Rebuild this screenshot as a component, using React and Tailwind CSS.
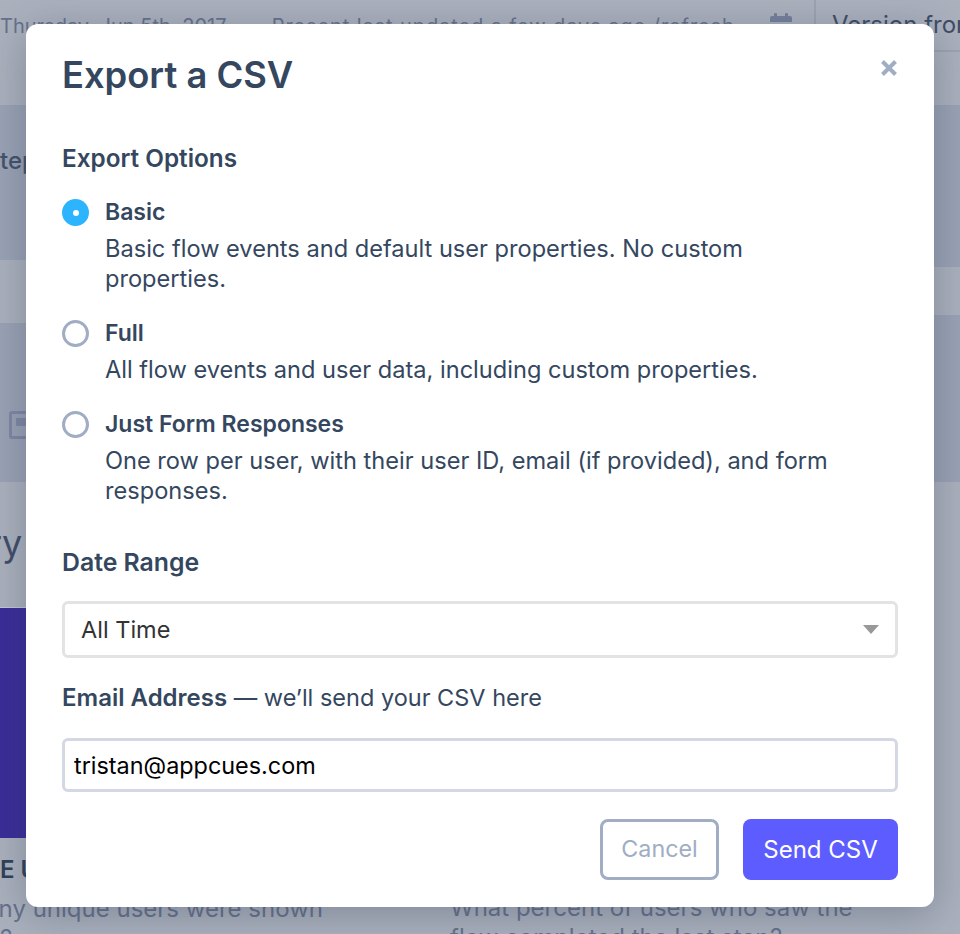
const sans = "font-['Inter','Noto_Sans',sans-serif]";

function CalendarIcon() {
  return (
    <svg width="22" height="22" viewBox="0 0 22 22" fill="#75819a">
      <rect x="4" y="0" width="3" height="4" rx="1" />
      <rect x="15" y="0" width="3" height="4" rx="1" />
      <path d="M0 5a2 2 0 0 1 2-2h18a2 2 0 0 1 2 2v4H0zM0 11h22v9a2 2 0 0 1-2 2H2a2 2 0 0 1-2-2z" />
    </svg>
  );
}

function StepIcon() {
  return (
    <svg width="26" height="28" viewBox="0 0 26 28">
      <rect x="1.5" y="1.5" width="23" height="25" rx="1.5" fill="none" stroke="#7f88a3" strokeWidth="3" />
      <rect x="7" y="7" width="12" height="8" fill="#7f88a3" />
    </svg>
  );
}

// dimmed page behind the modal
function Backdrop() {
  return (
    <div className="w-[960px] h-[934px] overflow-hidden bg-[#abb1bd] text-[#66728b]">
      <div className="h-[105px] flex items-start">
        <div className="w-[814px] h-[52px] flex justify-between pt-3 pr-[22px] text-[20px] leading-7 whitespace-nowrap">
          <span>
            Thursday, Jun 5th, 2017 — <span className="ml-3.5 tracking-[0.9px]">Present last updated a few days ago /refresh</span>
          </span>
          <span className="pt-px"><CalendarIcon /></span>
        </div>
        <div className="flex-1 h-[52px] border-l-2 border-b-2 border-[#9ca3b1] pl-4 pt-[9px] text-2xl leading-8 text-[#3f4d66] whitespace-nowrap overflow-hidden">
          Version from
        </div>
      </div>
      <div className="flex">
        <div className="w-[420px] shrink-0">
          <div className="h-[155px] bg-[#9aa3b5] pt-10 text-2xl font-medium leading-8 text-[#445269]">tep</div>
          <div className="h-[63px]"></div>
          <div className="h-[159px] bg-[#9aa3b5] pt-[88px] pl-[9px]"><StepIcon /></div>
          <div className="h-[126px] border-b border-[#c4c8d0] pt-[39px] -ml-3 text-4xl leading-[44px] text-[#3f4d66]">ry</div>
          <div className="h-[230px] bg-[#3a2c98]"></div>
          <div className="pt-4 text-2xl leading-8 font-semibold text-[#2f4058]">E U</div>
          <div className="w-[323px] mt-2 flex flex-col items-end text-2xl leading-[30px] whitespace-nowrap">
            <span>How many unique users were shown</span>
            <span className="self-start">?</span>
          </div>
        </div>
        <div className="flex-1">
          <div className="h-[162px] bg-[#9aa3b5]"></div>
          <div className="h-12"></div>
          <div className="h-[167px] bg-[#9aa3b5]"></div>
          <div className="pl-[30px] pt-[411px] text-2xl leading-[30px] whitespace-nowrap">
            <div>What percent of users who saw the</div>
            <div>flow completed the last step?</div>
          </div>
        </div>
      </div>
    </div>
  );
}

function Radio({ label, checked, children }) {
  return (
    <div className="flex gap-4">
      <div className={checked
        ? "w-[27px] h-[27px] mt-0.5 rounded-full bg-[#2cb4ff] flex items-center justify-center shrink-0"
        : "w-[27px] h-[27px] mt-0.5 rounded-full border-[3px] border-[#a0adc3] shrink-0"}>
        {checked && <div className="w-1.5 h-1.5 rounded-full bg-white"></div>}
      </div>
      <div>
        <div className="text-[23px] leading-[30px] font-semibold">{label}</div>
        <p className="mt-[7px] max-w-[740px] text-[23.6px] leading-[30px]">{children}</p>
      </div>
    </div>
  );
}

export default function App() {
  return (
    <div className={`relative w-[960px] h-[934px] overflow-hidden ${sans}`}>
      <Backdrop />
      <div className="absolute left-[26px] top-6 w-[908px] h-[883px] bg-white rounded-xl shadow-[0_8px_40px_rgba(50,60,85,0.35)] px-9 pt-7 text-[#34475f]">
        <div className="flex justify-between items-start">
          <h1 className="text-[36.3px] leading-[46px] font-semibold">Export a CSV</h1>
          <svg className="mt-[7px]" width="18" height="18" viewBox="0 0 18 18">
            <path d="M2.5 2.5l13 13M15.5 2.5l-13 13" stroke="#a0adc3" strokeWidth="4" />
          </svg>
        </div>
        <h2 className="mt-[45px] text-[24.3px] leading-[30px] font-semibold">Export Options</h2>
        <div className="mt-6 flex flex-col gap-6">
          <Radio label="Basic" checked>
            Basic flow events and default user properties. No custom properties.
          </Radio>
          <Radio label="Full">All flow events and user data, including custom properties.</Radio>
          <Radio label="Just Form Responses">
            One row per user, with their user ID, email (if provided), and form responses.
          </Radio>
        </div>
        <h2 className="mt-[41px] text-[24.8px] leading-[30px] font-semibold">Date Range</h2>
        <div className="mt-6 h-[57px] border-[3px] border-[#e3e3e3] rounded-md px-4 flex items-center justify-between text-[23.5px] text-[#333]">
          All Time
          <div className="w-0 h-0 border-x-[8px] border-x-transparent border-t-[9px] border-t-[#999]"></div>
        </div>
        <div className="mt-[25px] text-[23.5px] leading-[30px]">
          <span className="text-[24px] font-semibold">Email Address</span> — we’ll send your CSV here
        </div>
        <input
          readOnly
          value="tristan@appcues.com"
          className="mt-[25px] w-full h-[54px] border-[3px] border-[#d3d8e4] rounded-md px-[9px] text-[23.4px] text-black outline-none"
        />
        <div className="mt-[27px] flex justify-end gap-6">
          <button className="w-[119px] h-[61px] border-[3px] border-[#a0adc3] rounded-lg text-[23.3px] text-[#a0adc3]">Cancel</button>
          <button className="w-[155px] h-[61px] bg-[#5c5cff] rounded-lg text-2xl text-white">Send CSV</button>
        </div>
      </div>
    </div>
  );
}
